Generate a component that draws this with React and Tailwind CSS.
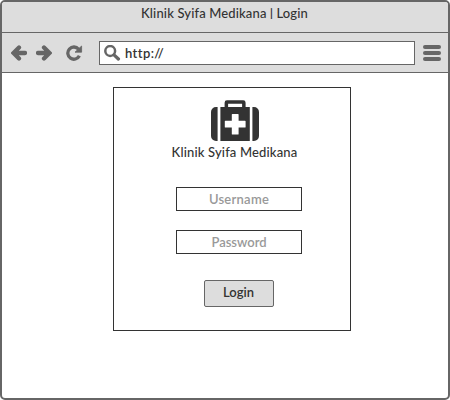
function Arrow({ flip }) {
  return (
    <svg width="16" height="16" viewBox="0 0 16 16" className={flip ? "rotate-180" : ""}>
      <path d="M8 2.5L2.5 8 8 13.5M3 8h11" fill="none" stroke="#666" strokeWidth="4.3" strokeLinejoin="miter" strokeLinecap="round" />
    </svg>
  );
}

function Reload() {
  return (
    <svg width="17" height="16" viewBox="0 0 17 16">
      <path d="M12.6 4.2A6.1 6.1 0 1 0 13.4 10.8" fill="none" stroke="#666" strokeWidth="3.3" />
      <path d="M15.6 1V7.2H9z" fill="#666" stroke="#666" strokeWidth=".8" strokeLinejoin="round" />
    </svg>
  );
}

function Search() {
  return (
    <svg width="17" height="16" viewBox="0 0 17 16" className="shrink-0">
      <circle cx="6.2" cy="6" r="4.9" fill="none" stroke="#666" strokeWidth="2.5" />
      <path d="M10 9.9l4.4 4.1" stroke="#666" strokeWidth="3.3" strokeLinecap="round" />
    </svg>
  );
}

function Medkit() {
  return (
    <svg width="48" height="41" viewBox="0 0 48 41" fill="#333">
      <path d="M6.6 7v34H5a5 5 0 0 1-5-5V12a5 5 0 0 1 5-5zM41.4 7v34H43a5 5 0 0 0 5-5V12a5 5 0 0 0-5-5z" />
      <path
        fillRule="evenodd"
        d="M9.4 7H13.6V2.7A2.4 2.4 0 0 1 16 .3H32.2A2.4 2.4 0 0 1 34.6 2.7V7H38.8V41H9.4zM17.1 3.7V7H31.1V3.7zM21.4 14a.6.6 0 0 0-.6.6V20.7H14.4a.6.6 0 0 0-.6.6V27a.6.6 0 0 0 .6.6H20.8V34a.6.6 0 0 0 .6.6H27a.6.6 0 0 0 .6-.6V27.6H34a.6.6 0 0 0 .6-.6V21.3a.6.6 0 0 0-.6-.6H27.6V14.6A.6.6 0 0 0 27 14z"
      />
    </svg>
  );
}

const fieldClass =
  "h-6 w-[126px] border border-[#333] bg-white pb-px text-center text-[13px] font-semibold leading-5 text-[#333] outline-none placeholder:text-[#999]";

export default function App() {
  return (
    <div className="flex h-[400px] w-[450px] flex-col overflow-hidden rounded-[5px] border-2 border-[#666] bg-white font-['Lato','Liberation_Sans',sans-serif] text-[13px] font-medium text-[#333]">
      <header className="h-[31px] shrink-0 border-b border-[#666] bg-[#ddd] pt-[2px] pr-[1px] text-center leading-[18px]">
        <span className="tracking-[0.14px]">
          Klinik Syifa Medikana <span className="align-[1px] text-[11px] font-bold leading-none">|</span> Login
        </span>
      </header>
      <nav className="flex h-10 shrink-0 items-center border-b border-[#666] bg-[#ddd] pl-[9px] pr-[7px]">
        <div className="flex items-center gap-[9px]">
          <Arrow />
          <Arrow flip />
        </div>
        <div className="ml-[14px]">
          <Reload />
        </div>
        <div className="ml-[16px] flex h-6 w-[316px] items-center border border-[#666] bg-white pl-1">
          <Search />
          <span className="ml-1 text-[13px] font-semibold leading-[18px] tracking-[0.4px]">http://</span>
        </div>
        <div className="ml-auto flex w-[18px] flex-col gap-[2px]">
          <i className="h-1 rounded-[2px] bg-[#666]" />
          <i className="h-1 rounded-[2px] bg-[#666]" />
          <i className="h-1 rounded-[2px] bg-[#666]" />
        </div>
      </nav>
      <main className="flex flex-1 justify-center pt-[14px]">
        <form className="ml-[14px] flex h-[244px] w-[238px] flex-col items-center border border-[#333] pt-3">
          <div className="ml-[6px]">
            <Medkit />
          </div>
          <h1 className="ml-[5px] mt-[2px] text-[13px] font-medium leading-[18px] tracking-[0.16px]">Klinik Syifa Medikana</h1>
          <input placeholder="Username" className={`mt-[26px] ml-[14px] tracking-[0.25px] ${fieldClass}`} />
          <input placeholder="Password" className={`mt-[19px] ml-[14px] ${fieldClass}`} />
          <button type="button" className="mt-[26px] ml-[14px] h-[27px] w-[70px] rounded-[2px] border border-[#666] bg-[#ddd] pr-[1px] pb-[3px] text-[13px] font-semibold leading-[22px]">
            Login
          </button>
        </form>
      </main>
    </div>
  );
}
